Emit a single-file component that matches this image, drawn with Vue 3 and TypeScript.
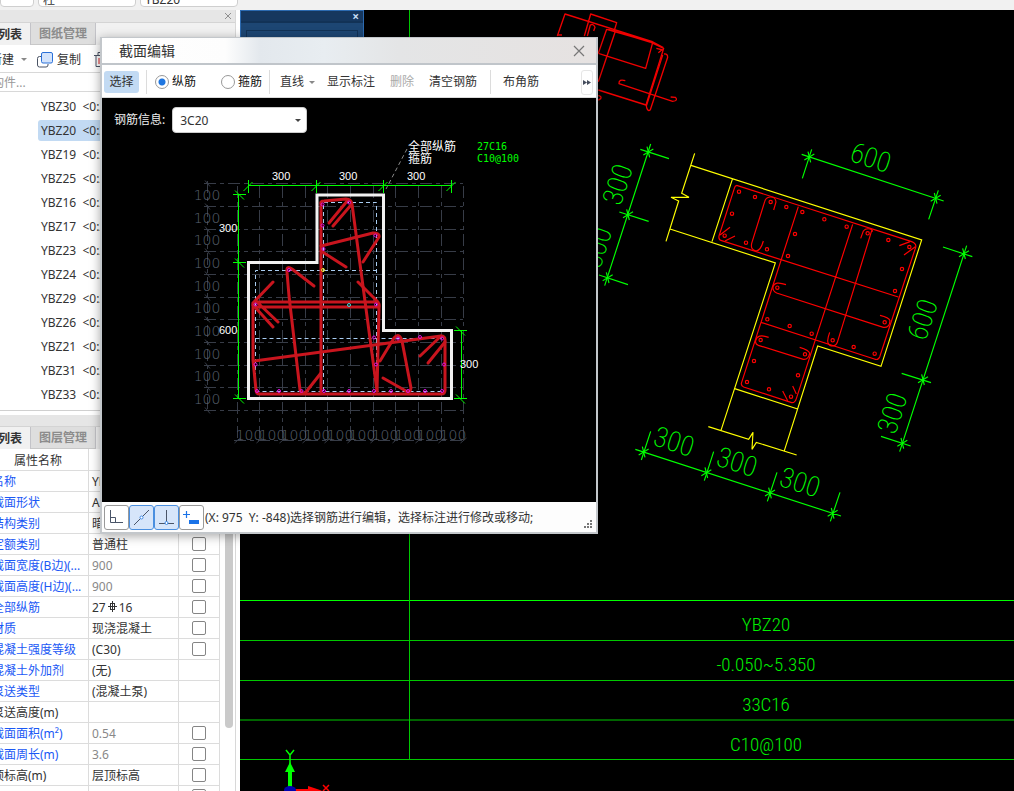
<script setup lang="ts">
import { ref } from 'vue'

interface Prop {
  name: string
  value: string
  kind?: 'plain' | 'link'
  muted?: boolean
  check: boolean
}

const members = ['YBZ30', 'YBZ20', 'YBZ19', 'YBZ25', 'YBZ16', 'YBZ17', 'YBZ23', 'YBZ24', 'YBZ29', 'YBZ26', 'YBZ21', 'YBZ31', 'YBZ33']
const selected = ref('YBZ20')
const barMode = ref('long')
const barInfo = ref('3C20')

const props: Prop[] = [
  { name: '名称', value: 'YBZ20', check: false },
  { name: '截面形状', value: 'A-d形', check: true },
  { name: '结构类别', value: '暗柱', check: true },
  { name: '定额类别', value: '普通柱', check: true },
  { name: '截面宽度(B边)(...', value: '900', muted: true, check: true },
  { name: '截面高度(H边)(...', value: '900', muted: true, check: true },
  { name: '全部纵筋', value: '27#16', check: true },
  { name: '材质', value: '现浇混凝土', check: true },
  { name: '混凝土强度等级', value: '(C30)', check: true },
  { name: '混凝土外加剂', value: '(无)', check: false },
  { name: '泵送类型', value: '(混凝土泵)', check: false },
  { name: '泵送高度(m)', value: '', kind: 'plain', check: false },
  { name: '截面面积(m²)', value: '0.54', muted: true, check: true },
  { name: '截面周长(m)', value: '3.6', muted: true, check: true },
  { name: '顶标高(m)', value: '层顶标高', kind: 'plain', check: true },
  { name: '', value: '', kind: 'plain', check: true },
]

const steps = Array.from({ length: 10 }, (_, i) => i)
const gridX = Array.from({ length: 11 }, (_, i) => Math.round(236.6 + i * 22.67) + 0.5)
const gridY = Array.from({ length: 11 }, (_, i) => Math.round(183.4 + i * 22.67) + 0.5)

const dots: number[][] = [
  [322.5, 204.5], [322.5, 225.5], [323.5, 249], [349, 202.5], [289, 270], [375.5, 235.5], [255.5, 304.5], [255.5, 364.5],
  [257, 391], [279, 391], [301.5, 391], [324, 391], [349, 391], [376, 304.5], [374, 337.5], [398, 338.5], [420, 337],
  [442, 338.5], [444, 364.5], [376, 364.5], [374, 391], [391, 391], [408, 391], [425, 391], [442, 391],
]

const rebars: number[][] = [
  [432, 185], [480, 201], [527, 216], [574, 231], [622, 246], [688, 268], [755, 290], [818, 310], [880, 330], [943, 351],
  [921, 417], [900, 483], [869, 577], [411, 251], [389, 317], [453, 338], [516, 358], [579, 378], [600, 312], [547, 473],
  [517, 568], [584, 588], [650, 611], [713, 631], [776, 651], [839, 671], [497, 630], [630, 673], [609, 736], [588, 800],
  [522, 778], [456, 756], [477, 693],
]

const nodes: number[][] = [
  [160, 66], [99, 254], [38, 443], [643, 81], [1022, 205], [1107, 371], [984, 749], [922, 940],
  [146, 966], [334, 1028], [525, 1089], [713, 1150],
]

const dims = [
  { t: '600', x: 828, y: 81, r: 18 },
  { t: '300', x: 66, y: 163, r: -72 },
  { t: '300', x: 4, y: 352, r: -72 },
  { t: '600', x: 981, y: 568, r: -72 },
  { t: '300', x: 890, y: 849, r: -72 },
  { t: '300', x: 238, y: 933, r: 18 },
  { t: '300', x: 427, y: 994, r: 18 },
  { t: '300', x: 616, y: 1055, r: 18 },
]

const tableRows = [
  { t: 'YBZ20', y: 631 },
  { t: '-0.050~5.350', y: 671 },
  { t: '33C16', y: 711 },
  { t: 'C10@100', y: 751 },
]
</script>

<template>
  <div class="app">
    <header class="topbar">
      <select class="pick first" aria-label="楼层"><option></option></select>
      <select class="pick" aria-label="构件大类"><option>柱</option></select>
      <select class="pick" aria-label="构件名称"><option>YBZ20</option></select>
    </header>

    <div class="work">
      <aside class="side">
        <div class="strip">
          <button class="x" aria-label="关闭面板">
            <svg width="8" height="8" viewBox="0 0 8 8"><path d="M1 1L7 7M7 1L1 7" stroke="#8f8f8f" fill="none" /></svg>
          </button>
        </div>
        <nav class="tabs">
          <button class="tab on">构件列表</button>
          <button class="tab">图纸管理</button>
        </nav>
        <div class="tools">
          <button class="tool">新建</button>
          <i class="caret"></i>
          <button class="tool copy">
            <svg width="16" height="16" viewBox="0 0 16 16">
              <path d="M4 4.500H2.500q-2 0-2 2V13q0 2 2 2H9q2 0 2-2V12" fill="none" stroke="#4a5364" />
              <rect x="4.500" y=".500" width="11" height="10.500" rx="1.500" fill="#d3e3fb" stroke="#2a70d8" />
            </svg>
            复制
          </button>
          <svg class="bin" width="14" height="16" viewBox="0 0 14 16">
            <path d="M0 3.500H14M4 3V.500H10V3M2 4V14.500H12V4" fill="none" stroke="#4a5364" />
            <path d="M5 6V12M9 6V12" stroke="#e02020" />
          </svg>
        </div>
        <input class="search" aria-label="搜索构件" placeholder="搜索构件..." />
        <ul class="list">
          <li v-for="m in members" :key="m">
            <button class="member" :class="{ on: m === selected }" @click="selected = m">{{ m }}&nbsp; &lt;0:27&gt;</button>
          </li>
        </ul>
        <div class="strip low"></div>
        <nav class="tabs">
          <button class="tab on">属性列表</button>
          <button class="tab">图层管理</button>
        </nav>
        <div class="props">
          <table>
            <thead>
              <tr><th class="c1">属性名称</th><th class="c2"></th><th class="c3"></th></tr>
            </thead>
            <tbody>
              <tr v-for="(p, i) in props" :key="i">
                <td class="c1" :class="{ plain: p.kind === 'plain' }">{{ p.name }}</td>
                <td class="c2" :class="{ muted: p.muted }">
                  <template v-if="p.value === '27#16'">27<svg class="bar" width="13" height="12" viewBox="0 0 13 12"><path d="M6.500 0V11M4.500 2V8.500M8.500 2V8.500M4 2.500H9M2 5.500H11M4 8.500H9" stroke="#333" fill="none" /></svg>16</template>
                  <template v-else>{{ p.value }}</template>
                </td>
                <td class="c3"><input v-if="p.check" type="checkbox" :aria-label="p.name || '附加'" /></td>
              </tr>
            </tbody>
          </table>
          <div class="scroll"><i></i></div>
        </div>
      </aside>

      <main class="canvas">
        <svg class="scene" viewBox="240 10 774 781" preserveAspectRatio="xMinYMin slice">
          <g stroke="#00c800" fill="none">
            <path d="M240 600.500H1014" stroke="#00ff00" />
            <path d="M240 640.500H1014M240 680.500H1014M240 720H1014M240 759.500H1014M409.500 10V760" />
          </g>
          <g class="cad big" fill="#00f000" text-anchor="middle">
            <text v-for="r in tableRows" :key="r.t" x="766" :y="r.y">{{ r.t }}</text>
          </g>

          <g transform="translate(350 0) scale(.33333)" stroke="#f00000" stroke-width="4" fill="none" stroke-linejoin="round">
            <path d="M622 108L645 42L905 124L940 143M703 108L722 42L800 68L792 95M745 160L770 88L908 128L887 205L745 160M775 88L900 126L941 145L888 315L745 270M795 97L745 245" />
            <path d="M938 165L889 318Q892 337 901 329L953 172Q953 160 942 162M826 242Q806 236 807 251L968 304Q986 302 976 292L962 291" />
            <path d="M712 108L721 75Q730 70 735 82L731 93M919 145L939 150M925 158L938 148M745 287Q756 288 752 296L745 301M622 105h14" />
          </g>

          <g transform="translate(595 130) scale(.33333)" fill="none" stroke-width="3.500">
            <path stroke="#ffff00" d="M288 106L980 330L858 709L668 648L568 962M299 70L260 190L282 202L228 202L251 213L213 334M225 297L541 399L378 901M412 148L351 335M419 776L608 837M340 890L461 928L474 907L471 958L484 937L605 975" />
            <g stroke="#ff0000">
              <path d="M425 166L950 335Q965 341 962 352L854 681Q849 692 838 687L498 577M425 166Q420 167 418 175L372 318Q370 330 380 332L910 501M610 230L439 760Q438 768 446 771L590 818Q600 819 604 806L773 283" />
              <path d="M573 464Q540 452 534 470Q532 483 545 489L865 592Q884 594 885 572Q882 562 855 556" />
              <path d="M797 325L805 303Q814 292 831 299L727 637Q721 652 704 646Q692 640 704 607M831 299L833 305" />
              <path d="M536 240L543 216Q542 200 525 201Q512 202 509 215L470 340Q466 360 483 363Q497 362 505 333" />
              <path d="M521 622Q486 610 482 632Q480 642 490 646L625 688Q640 690 644 670Q642 660 614 652" />
              <path d="M405 292L375 315M420 318L390 333M913 347L945 335M927 375L961 350M563 783L578 812M593 768L604 792" />
              <circle v-for="(c, i) in rebars" :key="i" :cx="c[0]" :cy="c[1]" r="5" />
            </g>
            <g stroke="#00ff00">
              <path d="M167 42L29 467M136 58L222 86M73 246L161 274M12 435L99 464M620 73L1046 213M650 58L622 145M1030 181L1001 268M1115 347L914 965M1044 351L1132 380M920 730L1008 758M858 919L947 948M121 958L738 1158M167 904L139 990M356 965L328 1052M546 1027L517 1114M735 1087L706 1174" />
              <path v-for="(n, i) in nodes" :key="i" :d="`M${n[0] - 15} ${n[1] + 9}l30 -18M${n[0] - 4} ${n[1] - 16}l8 32`" />
            </g>
            <g class="cad dim" fill="#00ff00" text-anchor="middle">
              <text v-for="(d, i) in dims" :key="i" :transform="`translate(${d.x} ${d.y}) rotate(${d.r})`" y="31">{{ d.t }}</text>
            </g>
          </g>

          <path d="M288 791V772H285L290 762L295 772H292V791Z" fill="#00ff00" />
          <path d="M290 764V755L286 750M290 755L294 750" stroke="#00ff00" stroke-width="1.500" fill="none" />
          <path d="M294 789H308V786L320 790L322 791H294Z" fill="#ff0000" />
          <path d="M323 785L329 791M329 785L323 791" stroke="#ff0000" stroke-width="1.500" />
          <ellipse cx="290" cy="790" rx="6" ry="4" fill="#0000b0" />
        </svg>
        <div class="palette">
          <button class="px" aria-label="关闭">×</button>
          <div class="pbody"></div>
        </div>
      </main>
    </div>

    <section class="dialog" role="dialog" aria-labelledby="dlg-title">
      <header class="title">
        <h1 id="dlg-title">截面编辑</h1>
        <button aria-label="关闭">
          <svg width="12" height="12" viewBox="0 0 12 12"><path d="M1 1L11 11M11 1L1 11" stroke="#777" stroke-width="1.200" fill="none" /></svg>
        </button>
      </header>
      <div class="dtools">
        <button class="choose">选择</button>
        <span class="sep"></span>
        <label class="radio"><input v-model="barMode" type="radio" name="bar" value="long" />纵筋</label>
        <label class="radio second"><input v-model="barMode" type="radio" name="bar" value="hoop" />箍筋</label>
        <span class="sep"></span>
        <button class="line">直线</button>
        <i class="caret"></i>
        <button class="cmd">显示标注</button>
        <button class="cmd" disabled>删除</button>
        <button class="cmd">清空钢筋</button>
        <span class="sep"></span>
        <button class="cmd last">布角筋</button>
        <button class="more" aria-label="更多">
          <svg width="8" height="5" viewBox="0 0 8 5"><path d="M0 0L4 2.500L0 5ZM4 0L8 2.500L4 5Z" fill="#444c5c" /></svg>
        </button>
      </div>
      <div class="stage">
        <svg class="scene" viewBox="102 98 494 404" preserveAspectRatio="xMinYMin slice">
          <g stroke="#373c47" fill="none">
            <path stroke-dasharray="12 4 4 4" :d="gridX.map(x => `M${x} 186V440`).join('') + gridY.map(y => `M204 ${y}H463`).join('') + 'M207.5 181V410M234 440.500H463'" />
            <path v-for="y in gridY" :key="y" :d="`M205 ${y - 3}l5 6`" />
            <path v-for="x in gridX" :key="x" :d="`M${x - 3} 443l6 -5`" />
          </g>
          <g class="gridtext" fill="#5a6272" text-anchor="middle">
            <text v-for="i in steps" :key="i" x="207" :y="200 + Math.round(i * 22.67)">100</text>
            <text v-for="i in steps" :key="'b' + i" :x="249 + Math.round(i * 22.67)" y="440">100</text>
          </g>
          <path d="M323.500 391V202.500H376.500V391M255.500 391V270.500H376.500M255.500 338.500H444.500V391.500H255.500" stroke="#a9cdf2" stroke-dasharray="4 3" fill="none" />
          <path d="M317 195H383.500V330.500H451.500V398.500H248.500V262.500H317Z" stroke="#f2f2f2" stroke-width="3" fill="none" />
          <g stroke="#00ff00" fill="none">
            <path d="M248 185.500H452M238.500 194V399M461.500 330V399" />
            <path v-for="x in [248.5, 316.5, 383.5, 451.5]" :key="x" :d="`M${x} 180V193M${x - 5} 191l9 -9`" />
            <path v-for="y in [194.5, 262.5, 398.5]" :key="y" :d="`M233 ${y}H246M235 ${y - 4}l9 9`" />
            <path v-for="y in [330.5, 398.5]" :key="'r' + y" :d="`M454 ${y}H467M456 ${y - 4}l9 9`" />
          </g>
          <g stroke="#c9151e" stroke-width="3" fill="none" stroke-linejoin="round" stroke-linecap="round">
            <path d="M321 393V204Q320 201 324 201L346 199Q351 199 352 204L377 391" />
            <path d="M348 200L329 223M351 205L333 226M321 246L373 233Q380 233 379 237L363 262M321 251L346 267" />
            <path d="M253 304V360L256 390Q256 394 260 394H441Q445 394 445 390V340Q445 336 441 336L254 361" />
            <path d="M254 302H376Q380 302 379 308L377 391M254 307H377M253 303L273 282M257 302L278 322M253 305L273 327M358 282L378 302" />
            <path d="M314 286L292 269Q286 265 287 272L289 296L300 390Q302 395 306 392L321 373" />
            <path d="M380 361L394 338Q399 332 402 341L411 388Q410 394 406 391L383 378M441 336L420 356M445 342L428 363" />
          </g>
          <circle v-for="(d, i) in dots" :key="i" :cx="d[0]" :cy="d[1]" r="1.500" fill="none" stroke="#e010e0" />
          <circle cx="323" cy="270" r="1.500" fill="none" stroke="#e8e020" />
          <circle cx="349" cy="305" r="1.500" fill="none" stroke="#40d8d8" />
          <path d="M407 149L386 189" stroke="#8a8a8a" stroke-dasharray="4 3" fill="none" />
          <g class="note" fill="#fff">
            <text x="272" y="180">300</text><text x="339" y="180">300</text><text x="407" y="180">300</text>
            <text x="219" y="232">300</text><text x="219" y="334">600</text><text x="460" y="368">300</text>
          </g>
          <g class="cn" fill="#fff"><text x="408" y="151">全部纵筋</text><text x="408" y="163">箍筋</text></g>
          <g class="mono" fill="#00ff00"><text x="477" y="150">27C16</text><text x="477" y="162">C10@100</text></g>
        </svg>
        <div class="info">
          <label for="bar-info">钢筋信息:</label>
          <span class="combo">
            <select id="bar-info" v-model="barInfo"><option>3C20</option></select>
            <i class="caret dark"></i>
          </span>
        </div>
      </div>
      <footer class="status">
        <button aria-label="正交"><svg width="15" height="15" viewBox="0 0 15 15"><path d="M1.500 0V12.500H14M1.500 7.500H6.500V12.500" fill="none" stroke="#4a5568" /></svg></button>
        <button class="on" aria-label="中点"><svg width="15" height="15" viewBox="0 0 15 15"><path d="M0 15L15 0" stroke="#4a5568" /><circle cx="7.500" cy="7.500" r="1.500" fill="#fff" stroke="#3f8be8" /></svg></button>
        <button class="on" aria-label="垂足"><svg width="15" height="15" viewBox="0 0 15 15"><path d="M7.500 0V13M0 13.500H15" stroke="#4a5568" fill="none" /><circle cx="7.500" cy="13" r="1.500" fill="#fff" stroke="#3f8be8" /></svg></button>
        <button aria-label="动态输入"><svg width="17" height="15" viewBox="0 0 17 15"><path d="M3.500 1V8M0 4.500H7" stroke="#1a73e8" stroke-width="1.200" /><rect x="6" y="10" width="10" height="4" fill="#1a73e8" /></svg></button>
        <span class="msg">(X: 975&nbsp; Y: -848)选择钢筋进行编辑，选择标注进行修改或移动;</span>
        <svg class="grip" width="8" height="8" viewBox="0 0 8 8"><path d="M6 0h2v2h-2zM3 3h2v2h-2zM6 3h2v2h-2zM0 6h2v2h-2zM3 6h2v2h-2zM6 6h2v2h-2z" fill="#777" /></svg>
      </footer>
    </section>
  </div>
</template>

<style>
html, body { background: #000; }
</style>

<style scoped>
.app { position: relative; display: flex; flex-direction: column; height: 100vh; overflow: hidden; background: #fff; color: #333; font: 12px/16px "Noto Sans", "Noto Sans CJK SC", sans-serif; }
.app * { box-sizing: border-box; }
button, select, input { font: inherit; color: inherit; margin: 0; }
button { border: 0; padding: 0; background: none; white-space: nowrap; }
svg { display: block; }

.topbar { display: flex; align-items: flex-end; gap: 4px; flex: none; height: 10px; padding-bottom: 3px; background: #f1f1f1; overflow: hidden; }
.pick { appearance: none; flex: none; width: 98px; height: 24px; padding: 8px 4px 0; border: 1px solid #cfcfcf; border-radius: 4px; background: #fff; }
.pick.first { width: 34px; }

.work { display: flex; flex: 1; min-height: 0; }
.side { display: flex; flex-direction: column; flex: none; width: 276px; margin-left: -40px; border-right: 1px solid #d8d8d8; background: #fff; }
.strip { display: flex; justify-content: flex-end; align-items: center; flex: none; height: 13px; padding-right: 3px; background: #e6e6e6; border-bottom: 1px solid #d4d4d4; }
.strip.low { margin-top: 4px; height: 12px; }
.tabs { display: flex; flex: none; height: 22px; background: #f1f1f1; }
.tab { width: 65px; padding-top: 1px; background: #dedede; border-right: 1px solid #c3c3c8; border-bottom: 1px solid #c8c8c8; color: #8c8c8c; font-weight: 700; }
.tab.on { width: 71px; padding-left: 14px; background: #f1f1f1; border-bottom: 0; color: #333; text-align: left; }
.tools { display: flex; align-items: center; flex: none; height: 28px; padding: 2px 0 0 30px; border-bottom: 1px solid #d8d8d8; }
.caret { flex: none; width: 0; height: 0; margin-left: 7px; border: 3px solid transparent; border-top: 3px solid #888; border-bottom: 0; }
.copy { display: flex; align-items: center; gap: 4px; margin-left: 10px; }
.bin { margin-left: 13px; }
.search { flex: none; width: 100%; height: 19px; padding: 0 0 0 8px; border: 0; border-bottom: 1px solid #d8d8d8; outline: 0; }
.search::placeholder { color: #999; opacity: 1; }
.list { flex: none; margin: 0; padding: 2px 0 4px; list-style: none; border-bottom: 1px solid #d0d0d0; }
.list li { height: 24px; padding: 2px 40px 0 78px; }
.member { display: block; width: 100%; height: 21px; padding-left: 3px; border-radius: 3px; text-align: left; }
.member.on { background: #c2daf3; }

.props { display: flex; flex: 1; min-height: 0; overflow: hidden; align-items: flex-start; }
table { flex: none; border-collapse: collapse; table-layout: fixed; width: 259px; margin: 0; }
th, td { height: 21px; padding: 2px 0 0; border: 1px solid #dcdcdc; border-top: 0; font-weight: 400; text-align: left; white-space: nowrap; overflow: hidden; }
th { padding-top: 3px; }
.c1 { width: 128px; padding-left: 31px; color: #1a58f5; }
th.c1 { padding-left: 53px; color: #333; }
.c1.plain { color: #333; }
.c2 { width: 90px; padding-left: 3px; }
.c2.muted { color: #888; }
.c3 { width: 41px; padding-top: 0; }
.c3 input { appearance: none; display: block; width: 14px; height: 14px; margin: 0 auto; border: 1px solid #858585; border-radius: 2px; background: #fff; }
.bar { display: inline-block; vertical-align: -1px; }
.scroll { width: 8px; margin-left: 5px; }
.scroll i { display: block; height: 279px; border-radius: 4px; background: #cacaca; }

.canvas { position: relative; flex: 1; min-width: 0; margin-left: 4px; background: #000; overflow: hidden; }
.scene { position: absolute; inset: 0; width: 100%; height: 100%; }
.cad { font-family: "Liberation Sans Narrow", "Roboto Condensed", Roboto, sans-serif; stroke: none; }
.big { font-size: 19px; font-weight: 300; }
.dim { font-size: 84px; font-weight: 200; }
.palette { position: absolute; top: 0; left: 0; width: 124px; height: 60px; border: 1px solid #2c6ab0; background: #1d4673; }
.px { display: block; width: 100%; height: 12px; padding-right: 4px; border-bottom: 2px solid #123256; background: #16375e; color: #c4dcf4; font-weight: 700; text-align: right; line-height: 12px; }
.pbody { margin: 7px 5px; height: 30px; border: 1px solid #123256; }

.dialog { position: absolute; top: 37px; left: 100px; width: 498px; border: 2px solid #c3c7cb; border-top: 1px solid #c3c7cb; background: #fdfdfd; box-shadow: 0 2px 10px rgba(0, 0, 0, .35); }
.title { display: flex; align-items: center; justify-content: space-between; height: 27px; padding: 0 11px 0 17px; border-bottom: 2px solid #c0c5ca; background: linear-gradient(90deg, #fff 0%, #fdfdfd 25%, #e3e8ed 32%, #e8edf1 45%, #e4e5e6 60%, #e6e2e1 100%); }
h1 { margin: 0; font-size: 14px; line-height: 20px; font-weight: 400; }
.dtools { display: flex; align-items: center; height: 33px; padding: 2px 3px 0 2px; border-bottom: 1px solid #dadada; background: #fff; }
.choose { width: 35px; height: 22px; border-radius: 3px; background: #c2daf3; }
.sep { flex: none; width: 1px; height: 24px; margin-left: 7px; background: #dcdcdc; }
.radio { display: flex; align-items: center; gap: 3px; margin-left: 8px; color: #111; white-space: nowrap; }
.radio.second { margin-left: 25px; }
.radio input { appearance: none; width: 14px; height: 14px; border: 1px solid #999; border-radius: 50%; background: #fff; }
.radio input:checked { background: radial-gradient(circle, #1f76e0 3px, #fff 4px); }
.line { margin-left: 10px; }
.dtools .caret { margin-right: -3px; margin-left: 5px; }
.cmd { margin-left: 15px; }
.cmd:disabled { color: #aaa; }
.sep + .cmd { margin-left: 12px; }
.cmd + .sep { margin-left: 13px; }
.more { display: flex; align-items: center; justify-content: center; width: 12px; height: 25px; margin-left: auto; border: 1px solid #e6e6e6; border-radius: 3px; }
.stage { position: relative; height: 404px; background: #000; overflow: hidden; }
.gridtext { font: 200 14px "DejaVu Sans Light", "DejaVu Sans", sans-serif; }
.note { font: 11px "Liberation Sans", sans-serif; }
.cn { font: 12px "Noto Sans CJK SC", sans-serif; }
.mono { font: 10px "DejaVu Sans Mono", monospace; }
.info { position: relative; display: flex; align-items: center; gap: 7px; padding: 9px 0 0 12px; color: #eee; }
.combo { position: relative; width: 135px; color: #333; }
.combo select { appearance: none; display: block; width: 100%; height: 26px; padding: 2px 7px 0; border: 1px solid #ccc; border-radius: 4px; background: #fff; }
.caret.dark { position: absolute; right: 6px; top: 12px; border-top-color: #444; }
.status { display: flex; align-items: center; height: 30px; padding: 0 3px 0 2px; }
.status button { display: flex; align-items: center; justify-content: center; flex: none; width: 25px; height: 25px; border: 1px solid #999; border-radius: 3px; background: #fff; }
.status .on { border-color: #4a8fe0; background: #d6e5fa; }
.msg { padding: 2px 0 0 1px; white-space: nowrap; }
.grip { align-self: flex-end; margin: 0 1px 4px auto; }
</style>
